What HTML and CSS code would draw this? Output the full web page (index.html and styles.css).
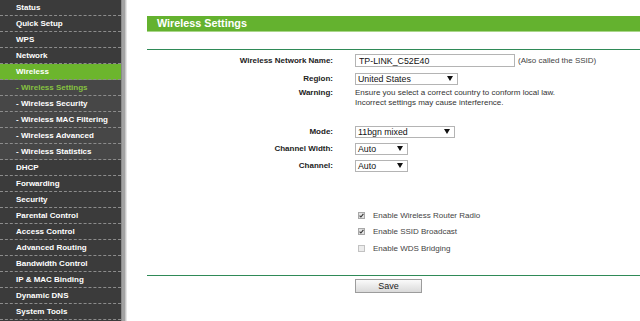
FILE: index.html
```html
<!DOCTYPE html>
<html lang="en">
<head>
    <meta charset="UTF-8">
    <meta name="viewport" content="width=device-width, initial-scale=1.0">
    <title>Wireless Settings</title>
    <link rel="stylesheet" href="styles.css">
</head>
<body>
    <div class="page">
        <!-- Side Menu -->
        <nav class="menu">
            <div class="menu-item">Status</div>
            <div class="menu-item">Quick Setup</div>
            <div class="menu-item">WPS</div>
            <div class="menu-item">Network</div>
            <div class="menu-item active">Wireless</div>
            <div class="menu-item sub current">- Wireless Settings</div>
            <div class="menu-item sub">- Wireless Security</div>
            <div class="menu-item sub">- Wireless MAC Filtering</div>
            <div class="menu-item sub">- Wireless Advanced</div>
            <div class="menu-item sub">- Wireless Statistics</div>
            <div class="menu-item">DHCP</div>
            <div class="menu-item">Forwarding</div>
            <div class="menu-item">Security</div>
            <div class="menu-item">Parental Control</div>
            <div class="menu-item">Access Control</div>
            <div class="menu-item">Advanced Routing</div>
            <div class="menu-item">Bandwidth Control</div>
            <div class="menu-item">IP &amp; MAC Binding</div>
            <div class="menu-item">Dynamic DNS</div>
            <div class="menu-item">System Tools</div>
        </nav>
        <div class="menu-edge"></div>

        <!-- Main Content -->
        <main class="content">
            <div class="panel-title">Wireless Settings</div>
            <div class="rule"></div>

            <div class="form-row ssid-row">
                <div class="label">Wireless Network Name:</div>
                <div class="field">
                    <input class="text-input" type="text" value="TP-LINK_C52E40">
                    <span class="hint">(Also called the SSID)</span>
                </div>
            </div>

            <div class="form-row region-row">
                <div class="label">Region:</div>
                <div class="field">
                    <div class="select select-wide">
                        <span>United States</span>
                        <svg width="6" height="5" viewBox="0 0 6 5"><path d="M0 0H6L3 5Z" fill="#111"/></svg>
                    </div>
                </div>
            </div>

            <div class="form-row warning-row">
                <div class="label">Warning:</div>
                <div class="field note">
                    Ensure you select a correct country to conform local law.<br>
                    Incorrect settings may cause interference.
                </div>
            </div>

            <div class="form-row mode-row">
                <div class="label">Mode:</div>
                <div class="field">
                    <div class="select select-mode">
                        <span>11bgn mixed</span>
                        <svg width="6" height="5" viewBox="0 0 6 5"><path d="M0 0H6L3 5Z" fill="#111"/></svg>
                    </div>
                </div>
            </div>

            <div class="form-row">
                <div class="label">Channel Width:</div>
                <div class="field">
                    <div class="select select-short">
                        <span>Auto</span>
                        <svg width="6" height="5" viewBox="0 0 6 5"><path d="M0 0H6L3 5Z" fill="#111"/></svg>
                    </div>
                </div>
            </div>

            <div class="form-row">
                <div class="label">Channel:</div>
                <div class="field">
                    <div class="select select-short">
                        <span>Auto</span>
                        <svg width="6" height="5" viewBox="0 0 6 5"><path d="M0 0H6L3 5Z" fill="#111"/></svg>
                    </div>
                </div>
            </div>

            <div class="checks">
                <div class="check-row">
                    <span class="checkbox checked">
                        <svg width="5" height="5" viewBox="0 0 5 5"><path d="M0.6 2.6L1.9 4L4.4 0.8" fill="none" stroke="#333" stroke-width="1.1"/></svg>
                    </span>
                    <span>Enable Wireless Router Radio</span>
                </div>
                <div class="check-row">
                    <span class="checkbox checked">
                        <svg width="5" height="5" viewBox="0 0 5 5"><path d="M0.6 2.6L1.9 4L4.4 0.8" fill="none" stroke="#333" stroke-width="1.1"/></svg>
                    </span>
                    <span>Enable SSID Broadcast</span>
                </div>
                <div class="check-row">
                    <span class="checkbox"></span>
                    <span>Enable WDS Bridging</span>
                </div>
            </div>

            <div class="rule rule-bottom"></div>

            <div class="actions">
                <button class="save-btn">Save</button>
            </div>
        </main>
    </div>
</body>
</html>
```

FILE: styles.css
```css
/* General Reset */
body {
    margin: 0;
    font-family: "Liberation Sans", Arial, sans-serif;
    background: #fff;
    color: #333;
}

.page {
    display: flex;
    height: 321px;
    overflow: hidden;
}

/* Side Menu */
.menu {
    width: 121px;
    flex-shrink: 0;
    display: flex;
    flex-direction: column;
    background: #3b3b3b;
}

.menu-item {
    height: 15px;
    line-height: 15px;
    padding-left: 16px;
    font-size: 8px;
    font-weight: bold;
    color: #fff;
    background: #3b3b3b;
    border-bottom: 1px dashed #8c8c8c;
    white-space: nowrap;
}

.menu-item.sub {
    background: #474747;
}

.menu-item.active {
    background: #6cb52d;
}

.menu-item.current {
    color: #86c340;
}

.menu-edge {
    width: 6px;
    flex-shrink: 0;
    background: linear-gradient(90deg, #8a8a8a 0, #8a8a8a 1px, #a3a3a3 1px, #a3a3a3 4px, #c9c9c9 4px, #c9c9c9 5px, #e6e6e6 5px);
}

/* Main Content */
.content {
    flex: 1;
    padding: 16px 0 0 20px;
}

.panel-title {
    height: 15px;
    line-height: 15px;
    padding-left: 10px;
    background: #64b22f;
    border-bottom: 1px solid #a9d68a;
    color: #fff;
    font-size: 10.8px;
    font-weight: bold;
}

.rule {
    height: 1px;
    margin-top: 17px;
    background: #2f8a57;
}

/* Form Rows */
.form-row {
    display: grid;
    grid-template-columns: 186px 1fr;
    column-gap: 22px;
    align-items: center;
    height: 17px;
    font-size: 8px;
}

.ssid-row {
    margin-top: 2px;
}

.region-row {
    height: 19px;
}

.label {
    text-align: right;
    font-weight: bold;
    color: #222;
    white-space: nowrap;
}

.field {
    display: flex;
    align-items: center;
    white-space: nowrap;
}

.text-input {
    box-sizing: border-box;
    width: 160px;
    height: 13px;
    margin: 0;
    padding: 0 3px;
    border: 1px solid #b4b4b4;
    font-family: inherit;
    font-size: 8.8px;
    color: #111;
    outline: none;
}

.hint {
    margin-left: 3px;
    color: #444;
}

.select {
    box-sizing: border-box;
    height: 12px;
    display: flex;
    align-items: center;
    justify-content: space-between;
    padding: 0 4px 0 2px;
    border: 1px solid #b4b4b4;
    background: #fff;
    font-size: 8.8px;
    color: #111;
}

.select-wide {
    width: 103px;
}

.select-mode {
    width: 100px;
}

.select-short {
    width: 53px;
}

.warning-row {
    height: 20px;
    align-items: start;
    line-height: 10px;
}

.note {
    display: block;
    color: #333;
}

.mode-row {
    margin-top: 15px;
}

/* Checkboxes */
.checks {
    height: 50px;
    margin-top: 33px;
    padding-left: 211px;
    font-size: 8px;
    color: #444;
}

.check-row {
    display: flex;
    align-items: center;
    height: 16.5px;
}

.checkbox {
    box-sizing: border-box;
    width: 7px;
    height: 7px;
    margin-right: 8px;
    display: flex;
    align-items: center;
    justify-content: center;
    border: 1px solid #c2c2c2;
    background: #ececec;
}

.checkbox.checked {
    background: #e2e2e2;
    border-color: #a8a8a8;
}

.rule-bottom {
    margin-top: 18px;
}

/* Actions */
.actions {
    display: flex;
    padding: 3px 0 0 208px;
}

.save-btn {
    width: 67px;
    height: 14px;
    padding: 0;
    border: 1px solid #9c9c9c;
    background: linear-gradient(#fafafa, #dadada);
    font-family: inherit;
    font-size: 9px;
    color: #222;
}
```
